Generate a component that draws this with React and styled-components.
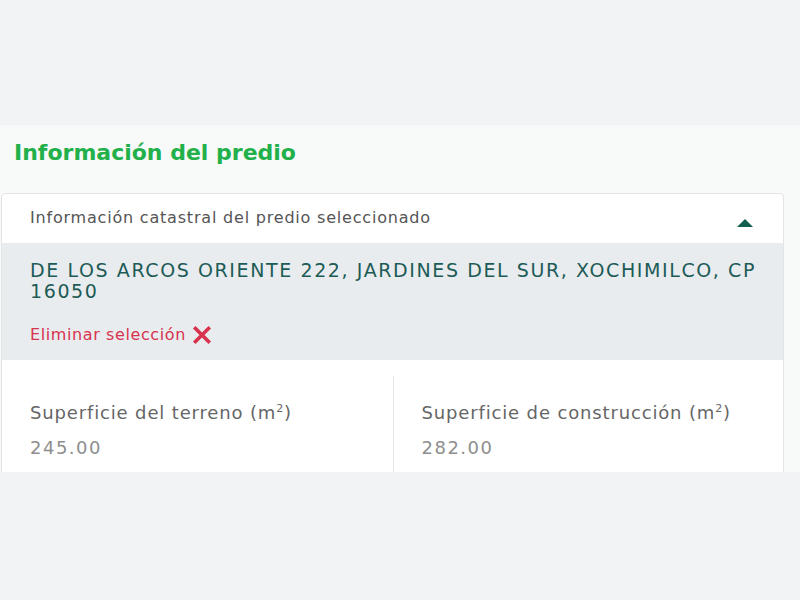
import styled, { createGlobalStyle } from "styled-components"

const Global = createGlobalStyle`
  html, body {
    margin: 0;
    padding: 0;
    background: #f2f3f4;
    font-family: "DejaVu Sans", "Liberation Sans", sans-serif;
  }
`

const Page = styled.div`
  padding-top: 125px;
  height: 600px;
  box-sizing: border-box;
`
const Panel = styled.section`
  background: #f8f9f9;
  height: 347px;
  overflow: hidden;
  padding: 0 16px 0 1px;
`
const Title = styled.h2`
  margin: 0;
  padding: 15px 0 0 13px;
  height: 55px;
  box-sizing: border-box;
  font-size: 22px;
  line-height: 26px;
  font-weight: 600;
  color: #22b04a;
`
const Card = styled.div`
  margin-top: 13px;
  background: #fff;
  border: 1px solid #e2e4e6;
  border-radius: 4px 4px 0 0;
`
const Header = styled.div`
  height: 49px;
  display: flex;
  align-items: center;
  justify-content: space-between;
  padding: 0 30px 0 28px;
  font-size: 16px;
  line-height: 20px;
  letter-spacing: 0.8px;
  color: #555;
  span { margin-top: -2px; }
`
const Caret = styled.span`
  width: 0;
  height: 0;
  border-left: 8px solid transparent;
  border-right: 8px solid transparent;
  border-bottom: 8px solid #0f5e4e;
  margin-top: 8px !important;
`
const Selected = styled.div`
  background: #e9ecee;
  padding: 17px 20px 0 28px;
  height: 117px;
  box-sizing: border-box;
`
const Address = styled.div`
  font-size: 19px;
  line-height: 21px;
  letter-spacing: 1.6px;
  color: #1c5b56;
  text-transform: uppercase;
`
const Remove = styled.div`
  margin-top: 23px;
  display: flex;
  align-items: center;
  gap: 6px;
  font-size: 16px;
  line-height: 20px;
  letter-spacing: 0.6px;
  color: #d8334e;
  cursor: pointer;
`
const Columns = styled.div`
  display: grid;
  grid-template-columns: 1fr 1fr;
  padding-top: 16px;
`
const Column = styled.div`
  padding: 26px 28px 0 28px;
  height: 96px;
  box-sizing: border-box;
  border-left: ${p => (p.divided ? "1px solid #e4e6e8" : "none")};
`
const Label = styled.div`
  font-size: 18px;
  line-height: 22px;
  letter-spacing: 0.85px;
  color: #666;
  sup { font-size: 11px; line-height: 0; }
`
const Value = styled.div`
  margin-top: 13px;
  font-size: 18px;
  line-height: 22px;
  letter-spacing: 1.5px;
  color: #8e8e8e;
`

const XIcon = () => (
  <svg width="20" height="20" viewBox="0 0 20 20">
    <path d="M3.5 3.5 L16.5 16.5 M16.5 3.5 L3.5 16.5" stroke="#d8334e" strokeWidth="3.6" strokeLinecap="square" />
  </svg>
)

export default function App() {
  return (
    <>
      <Global />
      <Page>
        <Panel>
          <Title>Información del predio</Title>
          <Card>
            <Header>
              <span>Información catastral del predio seleccionado</span>
              <Caret />
            </Header>
            <Selected>
              <Address>DE LOS ARCOS ORIENTE 222, JARDINES DEL SUR, XOCHIMILCO, CP 16050</Address>
              <Remove>
                Eliminar selección <XIcon />
              </Remove>
            </Selected>
            <Columns>
              <Column>
                <Label>Superficie del terreno (m<sup>2</sup>)</Label>
                <Value>245.00</Value>
              </Column>
              <Column divided>
                <Label>Superficie de construcción (m<sup>2</sup>)</Label>
                <Value>282.00</Value>
              </Column>
            </Columns>
          </Card>
        </Panel>
      </Page>
    </>
  )
}
